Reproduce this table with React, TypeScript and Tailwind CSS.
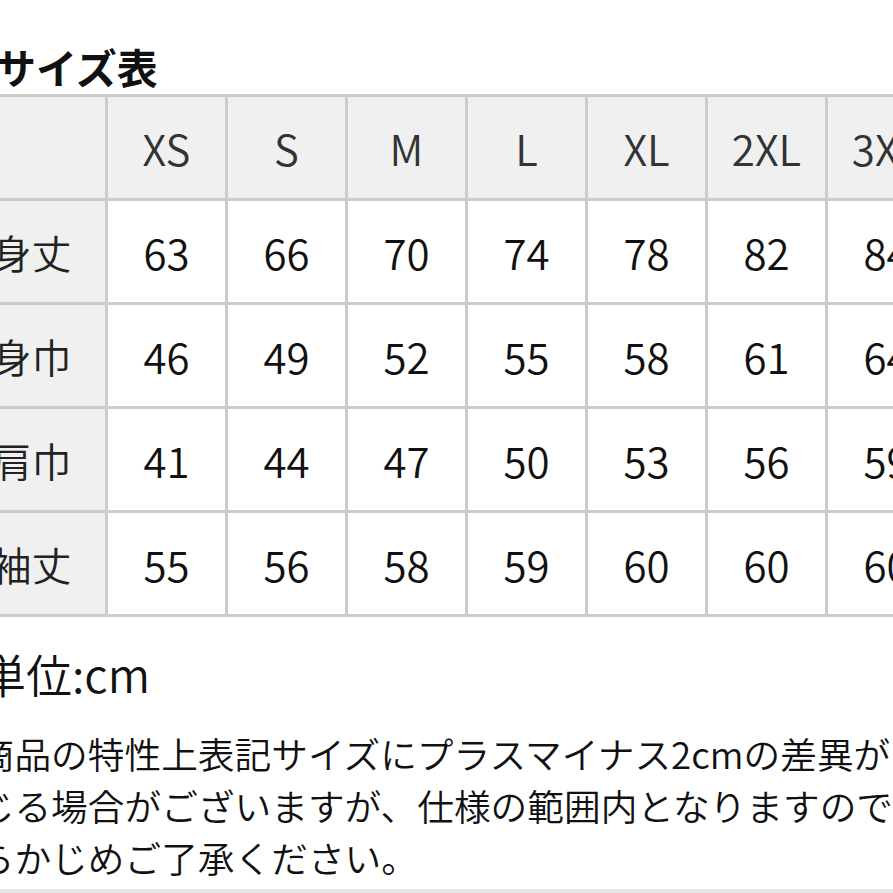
import React from "react"

const sizes = ["XS", "S", "M", "L", "XL", "2XL", "3XL"]

const rows = [
  { label: "身丈", values: [63, 66, 70, 74, 78, 82, 84] },
  { label: "身巾", values: [46, 49, 52, 55, 58, 61, 64] },
  { label: "肩巾", values: [41, 44, 47, 50, 53, 56, 59] },
  { label: "袖丈", values: [55, 56, 58, 59, 60, 60, 60] },
]

const font = { fontFamily: '"Noto Sans CJK JP", "Noto Sans", sans-serif' }

export default function App() {
  return (
    <div className="w-[893px] h-[893px] overflow-hidden bg-white" style={font}>
      <div className="-ml-[59px] w-[1100px] h-[893px] flex flex-col">
        {/* Title */}
        <h2 className="ml-[54px] mt-[46px] text-[41px] leading-[41px] font-bold text-[#111]">
          サイズ表
        </h2>

        {/* Size table */}
        <div className="ml-[14px] mt-[7px] w-max grid grid-cols-[147px_repeat(7,117px)] gap-[3px] p-[3px] bg-[#cccccc] font-[350]">
          <div className="h-[101px] bg-[#f0f0f0]"></div>
          {sizes.map((s) => (
            <div
              key={s}
              className="h-[101px] bg-[#f0f0f0] flex items-center justify-center text-[42px] text-[#333]"
            >
              {s}
            </div>
          ))}
          {rows.map((row) => (
            <React.Fragment key={row.label}>
              <div className="h-[101px] bg-[#f0f0f0] flex items-center justify-center text-[40px] text-[#222]">
                {row.label}
              </div>
              {row.values.map((v, i) => (
                <div
                  key={i}
                  className="h-[101px] bg-white flex items-center justify-center text-[42px] text-[#111]"
                >
                  {v}
                </div>
              ))}
            </React.Fragment>
          ))}
        </div>

        {/* Notes */}
        <p className="ml-[39px] mt-[30px] text-[46px] leading-[52px] text-[#111] font-[350]">単位:cm</p>
        <p className="mt-[28px] text-[36.7px] leading-[52px] text-[#111] whitespace-nowrap font-[350]">
          ※商品の特性上表記サイズにプラスマイナス2cmの差異が
          <br />
          生じる場合がございますが、仕様の範囲内となりますので、
          <br />
          あらかじめご了承ください。
        </p>

        <div className="mt-auto h-[4px] bg-[#e4e4e4]"></div>
      </div>
    </div>
  )
}
